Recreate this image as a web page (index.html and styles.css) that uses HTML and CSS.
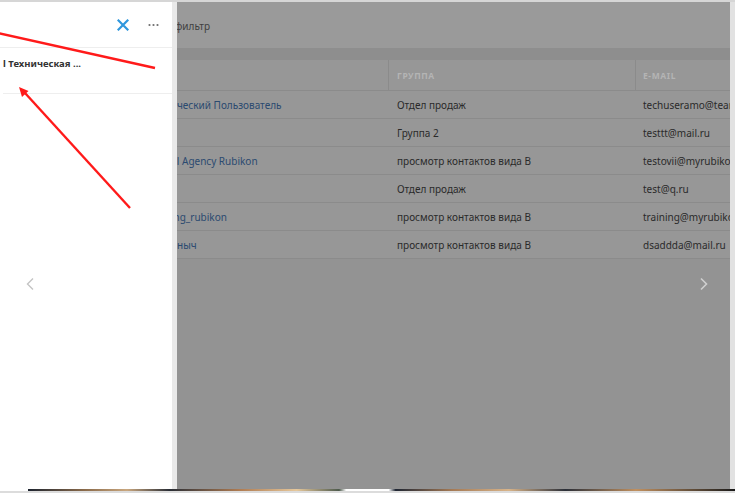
FILE: index.html
```html
<!DOCTYPE html>
<html lang="ru">
<head>
<meta charset="utf-8">
<link rel="stylesheet" href="styles.css">
</head>
<body>
<div class="app">
  <div class="topline"></div>
  <div class="main">
    <div class="stage">
      <div class="toolbar"><span class="pre">Сбросить</span><span class="filter">фильтр</span></div>
      <div class="band"></div>
      <div class="table">
        <div class="thead">
          <div class="th c-name">ИМЯ</div>
          <div class="th c-group">ГРУППА</div>
          <div class="th c-mail">E-MAIL</div>
        </div>
        <div class="tr"><div class="td c-name link">Технический Пользователь</div><div class="td c-group">Отдел продаж</div><div class="td c-mail">techuseramo@team.ru</div></div>
        <div class="tr"><div class="td c-name link">Тест</div><div class="td c-group">Группа 2</div><div class="td c-mail">testtt@mail.ru</div></div>
        <div class="tr"><div class="td c-name link">Digital Agency Rubikon</div><div class="td c-group">просмотр контактов вида B</div><div class="td c-mail">testovii@myrubikon.ru</div></div>
        <div class="tr"><div class="td c-name link">Тест</div><div class="td c-group">Отдел продаж</div><div class="td c-mail">test@q.ru</div></div>
        <div class="tr"><div class="td c-name link">training_rubikon</div><div class="td c-group">просмотр контактов вида B</div><div class="td c-mail">training@myrubikon.ru</div></div>
        <div class="tr"><div class="td c-name link">Степаныч</div><div class="td c-group">просмотр контактов вида B</div><div class="td c-mail">dsaddda@mail.ru</div></div>
      </div>
      <svg class="chev-right" width="10" height="14" viewBox="0 0 10 14"><path d="M2 1.5 L7.5 7 L2 12.5" fill="none" stroke="#cfcfcf" stroke-width="1.6"/></svg>

      <aside class="drawer">
        <div class="drawer-head">
          <svg class="close" width="12" height="12" viewBox="0 0 12 12"><path d="M1.5 1.5 L10.5 10.5 M10.5 1.5 L1.5 10.5" stroke="#2f97dd" stroke-width="2.2" stroke-linecap="square"/></svg>
          <svg class="more" width="11" height="4" viewBox="0 0 11 4"><circle cx="1.5" cy="2" r="1.1" fill="#6e6e6e"/><circle cx="5.5" cy="2" r="1.1" fill="#6e6e6e"/><circle cx="9.5" cy="2" r="1.1" fill="#6e6e6e"/></svg>
        </div>
        <div class="drawer-row">l Техническая ...</div>
        <svg class="chev-left" width="10" height="14" viewBox="0 0 10 14"><path d="M8 1.5 L2.5 7 L8 12.5" fill="none" stroke="#c4c4c4" stroke-width="1.4"/></svg>
      </aside>
    </div>
    <div class="scroll"></div>
  </div>
  <div class="strip"></div>
  <div class="bottomline"></div>

  <svg class="marks" width="735" height="493" viewBox="0 0 735 493">
    <line x1="-2" y1="33" x2="155" y2="68" stroke="#ff1a1a" stroke-width="2.4"/>
    <line x1="130" y1="208" x2="25" y2="93" stroke="#ff1a1a" stroke-width="2.4"/>
    <polygon points="19,87 28.5,91 22,97" fill="#ff1a1a"/>
  </svg>
</div>
</body>
</html>
```

FILE: styles.css
```css
* { box-sizing: border-box; }
html, body { margin: 0; padding: 0; }
body {
  width: 735px;
  height: 493px;
  overflow: hidden;
  font-family: "Noto Sans", "Open Sans", sans-serif;
  font-size: 10px;
  background: #fff;
}
.app {
  position: relative;
  width: 735px;
  height: 493px;
  display: flex;
  flex-direction: column;
}
.topline { height: 2px; background: #d6d6d6; }
.main { display: flex; height: 487px; }
.stage {
  position: relative;
  width: 730px;
  height: 100%;
  background: #939393;
  display: flex;
  flex-direction: column;
  overflow: hidden;
}
.scroll { width: 5px; background: #e2e2e2; }
.toolbar {
  height: 46px;
  background: #9a9a9a;
  display: flex;
  align-items: center;
  padding-top: 2px;
  color: #3f3f3f;
}
.pre { width: 175px; text-align: right; padding-right: 4px; }
.filter { color: #3f3f3f; }
.band { height: 12px; background: #8e8e8e; }
.table { background: #979797; }
.thead, .tr {
  display: grid;
  grid-template-columns: 388px 247px 1fr;
}
.thead { height: 31px; border-bottom: 1px solid #8b8b8b; }
.th {
  display: flex;
  align-items: center;
  font-size: 8.5px;
  font-weight: 700;
  letter-spacing: 0.6px;
  color: #b4b4b4;
}
.thead .c-group, .thead .c-mail { border-left: 1px solid #8b8b8b; }
.tr { height: 28px; border-bottom: 1px solid #8b8b8b; }
.td {
  display: flex;
  align-items: center;
  white-space: nowrap;
  overflow: hidden;
  color: #2a2a2a;
  padding-top: 1px;
}
.c-name { padding-left: 149px; }
.c-group { padding-left: 9px; }
.c-mail { padding-left: 8px; }
.thead .c-group { padding-left: 8px; }
.thead .c-mail { padding-left: 7px; }
.link { color: #2b4a70; }
.chev-right { position: absolute; left: 699px; top: 275px; }

.drawer {
  position: absolute;
  left: 0;
  top: 0;
  width: 177px;
  height: 100%;
  background: #fff;
  border-right: 5px solid #e9e9e9;
}
.drawer-head {
  height: 46px;
  border-bottom: 1px solid #eeeeee;
  display: flex;
  align-items: center;
  justify-content: flex-end;
  gap: 19px;
  padding-right: 13px;
}
.more { margin-top: 1px; }
.drawer-row {
  height: 46px;
  margin-left: 3px;
  border-bottom: 1px solid #eeeeee;
  padding-top: 9px;
  font-weight: 700;
  font-size: 9.5px;
  color: #333;
}
.chev-left { position: absolute; left: 25px; top: 275px; }

.strip {
  height: 2px;
  margin-left: 28px;
  background: linear-gradient(90deg, #1d2430 0%, #8a6a4a 8%, #c9a77f 14%, #2a2e36 20%, #b07c52 30%, #e6c89c 38%, #4d5a4c 44%, #fff 45%, #fff 51%, #1f2633 52%, #a57a55 60%, #d8b48a 68%, #2b2f38 76%, #c09060 86%, #1a1a1a 100%);
}
.bottomline { height: 2px; background: #dcdcdc; }
.marks { position: absolute; left: 0; top: 0; pointer-events: none; }
```
